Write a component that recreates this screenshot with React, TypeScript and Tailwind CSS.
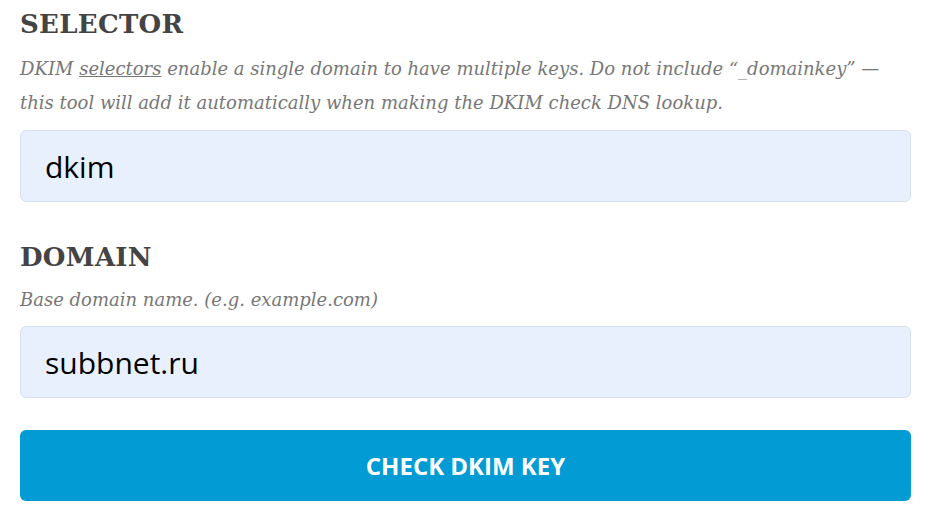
import { useState } from 'react';

export default function App() {
  const [selector, setSelector] = useState('dkim');
  const [domain, setDomain] = useState('subbnet.ru');

  return (
    <div className="min-h-screen bg-white px-5 pt-[6px]">
      {/* Selector */}
      <h2 className="font-['DejaVu_Serif',serif] text-[26px] font-bold leading-[36px] tracking-[0.3px] text-[#444]">
        SELECTOR
      </h2>
      <p className="mt-[10px] font-['DejaVu_Serif',serif] text-[18px] italic leading-[34px] text-[#777]">
        DKIM <a href="#" className="underline">selectors</a> enable a single domain to have multiple keys. Do not include
        “_domainkey” — this tool will add it automatically when making the DKIM check DNS lookup.
      </p>
      <input
        value={selector}
        onChange={(e) => setSelector(e.target.value)}
        className="mt-[10px] block h-[72px] w-full rounded-md border border-[#d6e0ef] bg-[#e8f0fe] px-6 font-['Open_Sans',sans-serif] text-[30px] text-black outline-none"
      />

      {/* Domain */}
      <h2 className="mt-[37px] font-['DejaVu_Serif',serif] text-[26px] font-bold leading-[36px] tracking-[0.3px] text-[#444]">
        DOMAIN
      </h2>
      <p className="mt-[8px] font-['DejaVu_Serif',serif] text-[18px] italic leading-[34px] text-[#777]">
        Base domain name. (e.g. example.com)
      </p>
      <input
        value={domain}
        onChange={(e) => setDomain(e.target.value)}
        className="mt-[9px] block h-[72px] w-full rounded-md border border-[#d6e0ef] bg-[#e8f0fe] px-6 font-['Open_Sans',sans-serif] text-[30px] text-black outline-none"
      />

      <button className="mt-[32px] block h-[71px] w-full rounded-md bg-[#029bd4] font-['Open_Sans',sans-serif] text-[24px] font-bold text-white">
        CHECK DKIM KEY
      </button>
    </div>
  );
}
